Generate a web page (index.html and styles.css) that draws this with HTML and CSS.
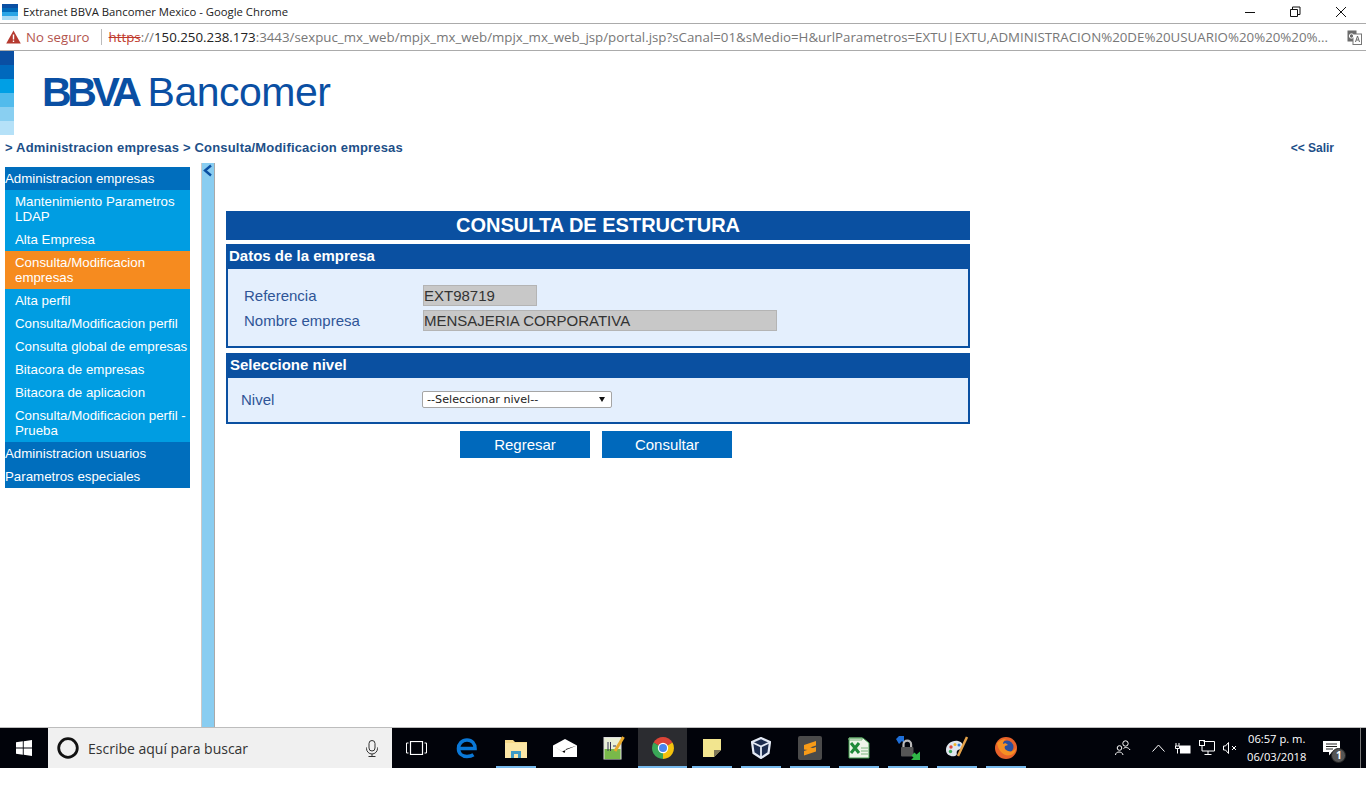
FILE: index.html
```html
<!DOCTYPE html>
<html lang="es">
<head>
    <meta charset="UTF-8">
    <title>Extranet BBVA Bancomer Mexico</title>
    <link rel="stylesheet" href="styles.css">
</head>
<body>
    <!-- ventana chrome -->
    <div class="titlebar">
        <div class="favicon"><i></i><i></i><i></i><i></i></div>
        <span class="win-title">Extranet BBVA Bancomer Mexico - Google Chrome</span>
        <div class="win-btns">
            <svg width="45" height="20" viewBox="0 0 45 20"><path d="M17 10.5h10" stroke="#111" fill="none"/></svg>
            <svg width="45" height="20" viewBox="0 0 45 20"><path d="M17.500 7.500h7v7h-7zM19.500 7.500v-2.500h7.500v7.500h-2.500" stroke="#111" fill="none"/></svg>
            <svg width="45" height="20" viewBox="0 0 45 20"><path d="M18 5l10 10M28 5l-10 10" stroke="#111" fill="none"/></svg>
        </div>
    </div>
    <div class="toolbar">
        <svg class="warn" width="15" height="14" viewBox="0 0 15 14"><path d="M7.500 0.500L14.800 13.500H0.200z" fill="#b5392f"/><path d="M6.800 4.500h1.400v5h-1.400zM6.800 10.500h1.400v1.500h-1.400z" fill="#fff"/></svg>
        <span class="not-secure">No seguro</span>
        <span class="sep"></span>
        <div class="url"><s>https</s>://<b>150.250.238.173</b>:3443/sexpuc_mx_web/mpjx_mx_web/mpjx_mx_web_jsp/portal.jsp?sCanal=01&amp;sMedio=H&amp;urlParametros=EXTU|EXTU,ADMINISTRACION%20DE%20USUARIO%20%20%20%...</div>
        <svg class="translate" width="15" height="15" viewBox="0 0 15 15"><rect x="0.500" y="0.500" width="9" height="11" fill="#6b6b6b"/><rect x="6" y="4" width="8.500" height="10.500" fill="#fff" stroke="#777"/><circle cx="4.500" cy="6" r="2.200" fill="none" stroke="#fff"/><path d="M8.500 12l2-6 2 6M9.500 10h2" stroke="#666" fill="none"/></svg>
    </div>

    <div class="page">
        <div class="page-head">
            <div class="stripes"><i></i><i></i><i></i><i></i><i></i><i></i></div>
            <div class="logo"><b>BBVA</b><span>Bancomer</span></div>
        </div>
        <div class="crumbs">
            <span>&gt; Administracion empresas &gt; Consulta/Modificacion empresas</span>
            <a href="#" class="salir">&lt;&lt; Salir</a>
        </div>
        <div class="content">
            <ul class="menu">
                <li class="head">Administracion empresas</li>
                <li>Mantenimiento Parametros LDAP</li>
                <li>Alta Empresa</li>
                <li class="active">Consulta/Modificacion empresas</li>
                <li>Alta perfil</li>
                <li>Consulta/Modificacion perfil</li>
                <li>Consulta global de empresas</li>
                <li>Bitacora de empresas</li>
                <li>Bitacora de aplicacion</li>
                <li>Consulta/Modificacion perfil - Prueba</li>
                <li class="head">Administracion usuarios</li>
                <li class="head">Parametros especiales</li>
            </ul>
            <div class="splitter">
                <svg width="11" height="13" viewBox="0 0 11 13"><path d="M9 1.500L3 6.500l6 5" stroke="#0a4fa3" stroke-width="2.400" fill="none"/></svg>
            </div>
            <div class="main">
                <h1 class="title">CONSULTA DE ESTRUCTURA</h1>
                <div class="panel">
                    <h2>Datos de la empresa</h2>
                    <div class="fields">
                        <label>Referencia</label>
                        <input class="short" type="text" value="EXT98719" readonly>
                        <label>Nombre empresa</label>
                        <input class="long" type="text" value="MENSAJERIA CORPORATIVA" readonly>
                    </div>
                </div>
                <div class="panel panel-nivel">
                    <h2>Seleccione nivel</h2>
                    <div class="nivel-row">
                        <label>Nivel</label>
                        <div class="select-wrap">
                            <select><option>--Seleccionar nivel--</option></select>
                        </div>
                    </div>
                </div>
                <div class="actions">
                    <button type="button">Regresar</button>
                    <button type="button">Consultar</button>
                </div>
            </div>
        </div>
    </div>

    <!-- barra de tareas -->
    <div class="taskbar">
        <div class="start">
            <svg width="16" height="16" viewBox="0 0 16 16"><path d="M0 2.300l6.800-1v6.300H0zM7.700 1.200L16 0v7.600H7.700zM0 8.400h6.800v6.300l-6.800-1zM7.700 8.400H16V16l-8.300-1.200z" fill="#fff"/></svg>
        </div>
        <div class="search">
            <svg width="24" height="24" viewBox="0 0 24 24"><circle cx="12" cy="12" r="9.300" fill="none" stroke="#111" stroke-width="2.800"/></svg>
            <span>Escribe aquí para buscar</span>
            <svg class="mic" width="14" height="17" viewBox="0 0 14 17"><rect x="4" y="0.500" width="6" height="10.500" rx="3" fill="none" stroke="#333"/><path d="M1.500 7.500v1a5.500 5.500 0 0 0 11 0v-1M7 14v2.500M3.500 16.500h7" stroke="#333" fill="none"/></svg>
        </div>
        <div class="slot">
            <svg width="21" height="14" viewBox="0 0 21 14"><rect x="4.500" y="0.500" width="12" height="13" fill="none" stroke="#fff" stroke-width="1.200"/><path d="M2.500 2H0.500v10h2M18.500 2h2v10h-2" fill="none" stroke="#fff"/></svg>
        </div>
        <div class="slot slot-edge">
            <svg width="22" height="22" viewBox="0 0 22 22"><path d="M3.500 11.500h15.500c0-5-3-8.500-8-8.500s-8.500 3.700-8.500 8.500 3.500 8 8.500 8c2.800 0 5-.7 6.500-1.700" fill="none" stroke="#0a78d7" stroke-width="3.600"/></svg>
        </div>
        <div class="slot open">
            <svg width="22" height="20" viewBox="0 0 22 20"><path d="M0 2h8l2 2h12v16H0z" fill="#f6d98a"/><rect y="5" width="22" height="15" fill="#fbe6a6"/><path d="M6 20v-7h10v7h-3v-4H9v4z" fill="#3d9cc6"/></svg>
        </div>
        <div class="slot">
            <svg width="24" height="18" viewBox="0 0 24 18"><path d="M0 6.500L12 0l12 6.500v11.500H0z" fill="#fff"/><path d="M0 6.500l9 6 15-6-11 3.500-1.500 4z" fill="#000"/></svg>
        </div>
        <div class="slot">
            <svg width="22" height="24" viewBox="0 0 22 24"><rect x="1" y="1.500" width="17" height="21.500" fill="#e9efd6" stroke="#ddd"/><rect x="1.500" y="13" width="16" height="10" fill="#79b94a"/><path d="M5 6v9M7.500 6v9M10 10h3" stroke="#335" fill="none"/><path d="M20.500 1L12 15" stroke="#e8a92b" stroke-width="3" fill="none"/></svg>
        </div>
        <div class="slot open current">
            <svg width="22" height="22" viewBox="0 0 22 22"><path d="M11 11L1.500 5.500A11 11 0 0 1 20.500 5.500z" fill="#db4437"/><path d="M11 11l9.500-5.500A11 11 0 0 1 11 22z" fill="#f4c20d"/><path d="M11 11v11A11 11 0 0 1 1.500 5.500z" fill="#3aa757"/><circle cx="11" cy="11" r="5.200" fill="#fff"/><circle cx="11" cy="11" r="4" fill="#4a85ed"/></svg>
        </div>
        <div class="slot open">
            <svg width="18" height="18" viewBox="0 0 18 18"><path d="M0 0h18v11l-7 7H0z" fill="#f2e58f"/><path d="M18 11h-7v7z" fill="#7d7658"/></svg>
        </div>
        <div class="slot open">
            <svg width="20" height="22" viewBox="0 0 20 22"><path d="M10 1l9 4-1.500 11L10 21l-7.500-5L1 5z" fill="#1b2c4e" stroke="#e4eaf5" stroke-width="2.200"/><path d="M1.500 5.500L10 9.500l8.500-4M10 9.500V21" stroke="#e4eaf5" stroke-width="1.800" fill="none"/></svg>
        </div>
        <div class="slot open">
            <svg width="24" height="24" viewBox="0 0 24 24"><rect width="24" height="24" rx="2" fill="#4a4a4a"/><path d="M6 9L18 5v4.500L6 13.500zM6 15L18 11v4.500L6 19.500zM6 9.500L18 13v2L6 13.500z" fill="#f79a17"/></svg>
        </div>
        <div class="slot open">
            <svg width="22" height="22" viewBox="0 0 22 22"><path d="M1 1h14l6 5v15H1z" fill="#eef5ea" stroke="#3f9a4b"/><path d="M1 1h13v2H1zM13 11h7M13 14h7M13 17h7" stroke="#7bb67f" fill="none"/><path d="M3 6l8 10M11 6L3 16" stroke="#1f8a3a" stroke-width="3" fill="none"/></svg>
        </div>
        <div class="slot open">
            <svg width="24" height="24" viewBox="0 0 24 24"><path d="M0 3l3-3 5 0v7L6 5 3 8z" fill="#1e6fd9"/><path d="M7.500 12V8.500a3.800 3.800 0 0 1 7.600 0V12" fill="none" stroke="#b9b9b9" stroke-width="2.200"/><rect x="5" y="11" width="12.500" height="9.500" rx="1" fill="#555"/><path d="M24 24h-9l2.500-2.500-2-2 3-3 2 2 3.500-3z" fill="#2fb846"/></svg>
        </div>
        <div class="slot open">
            <svg width="24" height="24" viewBox="0 0 24 24"><path d="M1 14C1 8 7 4 13 5c4 .7 6 4 4 7-1.500 2-4 1-5 3s1 4-2 5c-4 1-9-1-9-6z" fill="#dfe6ee"/><circle cx="6" cy="11" r="1.700" fill="#e0483d"/><circle cx="10" cy="8.500" r="1.500" fill="#f0b429"/><circle cx="5.500" cy="15.500" r="1.700" fill="#3aa757"/><circle cx="14" cy="9" r="1.500" fill="#2f7ed8"/><path d="M22 1L13 20" stroke="#e4a24a" stroke-width="2.500" fill="none"/></svg>
        </div>
        <div class="slot open">
            <svg width="24" height="24" viewBox="0 0 24 24"><circle cx="12" cy="12" r="11" fill="#e8622a"/><circle cx="13" cy="11" r="6.500" fill="#2a4f9e"/><path d="M3 7c1 8 7 14 14 12 3-1 5-4 5-7-2 3-5 4-8 3-3-1-4-3-3-5l3-1c-2-2-3-2-5-1 0-2 1-4 3-5-4 0-7 2-9 4z" fill="#f58f23"/></svg>
        </div>
        <div class="tray">
            <svg class="people" width="16" height="16" viewBox="0 0 16 16"><circle cx="10.500" cy="3.500" r="2.700" fill="none" stroke="#fff"/><circle cx="4.500" cy="8" r="2.300" fill="none" stroke="#fff"/><path d="M0.500 15c0-4 7-4 7.500 0M8.500 8.500c1-1.500 5-1.500 6.500 1.500" fill="none" stroke="#fff"/></svg>
            <svg class="chev" width="13" height="8" viewBox="0 0 13 8"><path d="M0.500 7.500l6-6.500 6 6.500" fill="none" stroke="#fff"/></svg>
            <svg class="power" width="16" height="13" viewBox="0 0 16 13"><path d="M1 1v3M4 1v3M0.500 4h4v2.500h-4zM2.500 6.500v5" stroke="#fff" fill="none"/><rect x="5" y="3.500" width="10.500" height="8" fill="#fff"/></svg>
            <svg class="net" width="16" height="16" viewBox="0 0 16 16"><path d="M4.500 1.500h11v9.500H3V6M9 11v3.500M5.500 14.500h7" stroke="#fff" fill="none"/><rect x="0.500" y="0.500" width="5" height="5" fill="none" stroke="#fff"/></svg>
            <svg class="vol" width="14" height="12" viewBox="0 0 14 12"><path d="M0.500 4h2l3-3.500v11l-3-3.500h-2z" fill="none" stroke="#fff"/><path d="M9 4l4 4M13 4l-4 4" stroke="#fff" fill="none"/></svg>
            <div class="clock">06:57 p. m.<br>06/03/2018</div>
            <div class="notif">
                <svg width="17" height="15" viewBox="0 0 17 15"><path d="M0 0h17v11h-8l-3 3.500V11H0z" fill="#fff"/><path d="M3 3h11M3 5.500h11M3 8h7" stroke="#222" fill="none"/></svg>
                <span class="badge">1</span>
            </div>
        </div>
    </div>
    <div class="below"></div>
</body>
</html>
```

FILE: styles.css
```css
* {
    box-sizing: border-box;
}
html, body {
    margin: 0;
    height: 100%;
}
body {
    display: flex;
    flex-direction: column;
    height: 809px;
    overflow: hidden;
    background: #fff;
    font-family: "Liberation Sans", Arial, sans-serif;
}

/* chrome */
.titlebar {
    display: flex;
    align-items: center;
    height: 24px;
    padding-left: 2px;
    border-bottom: 1px solid #ababab;
    flex: none;
}
.favicon {
    display: flex;
    flex-direction: column;
    width: 16px;
    height: 16px;
    margin-right: 5px;
}
.favicon i {
    flex: 1;
}
.favicon i:nth-child(1) { background: #0a4fa3; }
.favicon i:nth-child(2) { background: #0069b8; }
.favicon i:nth-child(3) { background: #2aa5e6; }
.favicon i:nth-child(4) { background: #a6daf5; }
.win-title {
    font-family: "Open Sans", sans-serif;
    font-size: 11.300px;
    color: #222;
}
.win-btns {
    display: flex;
    margin-left: auto;
    margin-right: 3px;
}
.toolbar {
    display: flex;
    align-items: center;
    height: 27px;
    padding-left: 6px;
    border-bottom: 1px solid #ababab;
    flex: none;
    font-family: "Open Sans", sans-serif;
}
.not-secure {
    margin-left: 5px;
    font-size: 13.200px;
    color: #b3544e;
}
.sep {
    width: 1px;
    height: 16px;
    margin: 0 7px 0 11px;
    background: #bbb;
}
.url {
    width: 1224px;
    font-size: 13.300px;
    color: #777;
    white-space: nowrap;
}
.url s {
    color: #c0392b;
}
.url b {
    font-weight: 400;
    color: #222;
}
.translate {
    margin-left: 14px;
}

/* pagina */
.page {
    flex: 1;
    display: flex;
    flex-direction: column;
    min-height: 0;
    border-bottom: 1px solid #bdbdbd;
}
.page-head {
    display: flex;
    height: 84px;
    flex: none;
}
.stripes {
    display: flex;
    flex-direction: column;
    width: 14px;
}
.stripes i {
    flex: 1;
}
.stripes i:nth-child(1) { background: #0a4fa3; }
.stripes i:nth-child(2) { background: #0069bd; }
.stripes i:nth-child(3) { background: #009fe5; }
.stripes i:nth-child(4) { background: #52bbec; }
.stripes i:nth-child(5) { background: #89cff1; }
.stripes i:nth-child(6) { background: #b5e1f8; }
.logo {
    display: flex;
    align-items: baseline;
    margin: 18px 0 0 28px;
    font-size: 41px;
    line-height: 46px;
    color: #0a4fa3;
}
.logo b {
    letter-spacing: -4.400px;
    margin-right: 10px;
}
.logo span {
    letter-spacing: -0.500px;
}
.crumbs {
    display: flex;
    justify-content: space-between;
    height: 28px;
    padding: 5px 32px 0 5px;
    flex: none;
    font-size: 13px;
    font-weight: bold;
    line-height: 15px;
    color: #1d4f88;
    letter-spacing: 0.180px;
}
.salir {
    margin-top: 1px;
    font-size: 12px;
    letter-spacing: 0;
    color: #1d4f88;
    text-decoration: none;
}
.content {
    flex: 1;
    display: flex;
    min-height: 0;
}
.menu {
    width: 185px;
    margin: 4px 0 0 5px;
    padding: 0;
    list-style: none;
    align-self: flex-start;
    font-size: 13.300px;
    line-height: 15px;
    color: #fff;
}
.menu li {
    padding: 4px 0 4px 10px;
    background: #009de2;
}
.menu li.head {
    padding-left: 0;
    background: #006ebd;
}
.menu li.active {
    background: #f68b1f;
}
.splitter {
    width: 14px;
    margin-left: 11px;
    padding-top: 1px;
    background: #89cdf1;
    border-left: 1px solid #c9c9c9;
    border-right: 1px solid #a9a9a9;
}
.splitter svg {
    display: block;
}
.main {
    width: 744px;
    margin-left: 11px;
    padding-top: 48px;
}
.title {
    margin: 0 0 4px;
    height: 29px;
    background: #0a50a1;
    color: #fff;
    font-size: 20px;
    line-height: 28px;
    text-align: center;
}
.panel {
    margin-bottom: 5px;
    background: #e4effd;
    border: 2px solid #0a50a1;
    border-top: 0;
}
.panel h2 {
    margin: 0 -2px;
    height: 25px;
    padding-left: 3px;
    background: #0a50a1;
    color: #fff;
    font-size: 15px;
    line-height: 24px;
}
.panel-nivel h2 {
    padding-left: 4px;
}
.fields {
    display: grid;
    grid-template-columns: 179px auto;
    justify-content: start;
    align-items: center;
    row-gap: 4px;
    padding: 16px 0 15px 16px;
}
.fields label,
.nivel-row label {
    font-size: 15px;
    color: #2f5597;
}
.fields input {
    height: 21px;
    padding: 0;
    border: 1px solid #b4b4b4;
    background: #c8c8c8;
    font-family: "Liberation Sans", Arial, sans-serif;
    font-size: 15px;
    color: #333;
}
.short { width: 114px; }
.long { width: 354px; }
.nivel-row {
    display: flex;
    align-items: center;
    padding: 13px 0 14px 13px;
}
.nivel-row label {
    width: 181px;
}
.select-wrap {
    position: relative;
    width: 190px;
    height: 17px;
}
.select-wrap::after {
    content: "";
    position: absolute;
    right: 7px;
    top: 6px;
    border-left: 3px solid transparent;
    border-right: 3px solid transparent;
    border-top: 5px solid #111;
}
.select-wrap select {
    appearance: none;
    display: block;
    width: 100%;
    height: 100%;
    padding: 0 0 0 4px;
    border: 1px solid #a5a5a5;
    border-radius: 2px;
    background: #fff;
    font-family: "DejaVu Sans", sans-serif;
    font-size: 11.200px;
    color: #222;
}
.actions {
    display: flex;
    justify-content: center;
    gap: 12px;
    padding: 2px 4px 0 0;
}
.actions button {
    width: 130px;
    height: 27px;
    border: 0;
    background: #0069bc;
    color: #fff;
    font-family: "Liberation Sans", Arial, sans-serif;
    font-size: 15px;
}

/* barra de tareas */
.taskbar {
    display: flex;
    align-items: center;
    height: 40px;
    flex: none;
    background: #01030a;
}
.start {
    display: flex;
    align-items: center;
    justify-content: center;
    width: 48px;
    height: 100%;
}
.search {
    display: flex;
    align-items: center;
    width: 344px;
    height: 100%;
    padding: 0 13px 0 8px;
    background: #f0f0f0;
    font-family: "Open Sans", sans-serif;
    font-size: 14px;
    color: #333;
}
.search span {
    margin-left: 8px;
}
.mic {
    margin-left: auto;
}
.slot {
    position: relative;
    display: flex;
    align-items: center;
    justify-content: center;
    width: 49px;
    height: 100%;
}
.slot-edge {
    margin-left: 1px;
}
.slot.open::after {
    content: "";
    position: absolute;
    left: 5px;
    right: 4px;
    bottom: 0;
    height: 2px;
    background: #76b9ed;
}
.slot.current {
    background: #2b2c30;
}
.slot.current::after {
    left: 0;
    right: 0;
}
.tray {
    display: flex;
    align-items: center;
    height: 100%;
    margin-left: 85px;
    width: 246px;
    border-right: 1px solid #777;
    color: #fff;
}
.chev { margin-left: 21px; }
.power { margin-left: 10px; }
.net { margin-left: 8px; }
.vol { margin-left: 8px; }
.clock {
    margin-left: 10px;
    font-family: "Open Sans", sans-serif;
    font-size: 11.200px;
    line-height: 18px;
    text-align: center;
}
.notif {
    position: relative;
    display: flex;
    margin-left: 17px;
}
.badge {
    position: absolute;
    left: 8px;
    top: 7px;
    width: 15px;
    height: 15px;
    border-radius: 50%;
    background: #555;
    border: 1px solid #222;
    font-family: "Open Sans", sans-serif;
    font-size: 10px;
    font-weight: bold;
    line-height: 13px;
    text-align: center;
}
.below {
    height: 41px;
    flex: none;
}
```
